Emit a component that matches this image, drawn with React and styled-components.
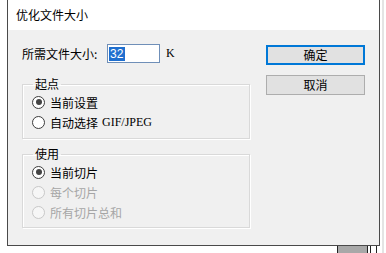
import React from "react";
import styled, { createGlobalStyle } from "styled-components";

const Global = createGlobalStyle`
  html, body { margin: 0; padding: 0; background: #fff; }
  body { font-family: "Noto Sans CJK SC", "Noto Sans", sans-serif; font-size: 12px; color: #000; }
`;

const Desktop = styled.div`
  position: relative;
  width: 386px;
  height: 253px;
  overflow: hidden;
  background: #fff;
`;

const Dialog = styled.div`
  margin-left: 7px;
  width: 373px;
  height: 246px;
  box-sizing: border-box;
  border: 1px solid #4a4a4a;
  border-top: none;
  background: #f0f0f0;
  display: flex;
  flex-direction: column;
`;

const TitleBar = styled.div`
  height: 30px;
  background: #fff;
  display: flex;
  align-items: center;
  padding-left: 8px;
  font-size: 12px;
  line-height: 16px;
`;

const Body = styled.div`
  flex: 1;
  display: grid;
  grid-template-columns: 1fr 99px;
  padding: 14px 14px 0 14px;
`;

const LeftCol = styled.div`
  display: flex;
  flex-direction: column;
  width: 228px;
`;

const SizeRow = styled.div`
  display: flex;
  align-items: center;
  height: 19px;
  margin-bottom: 13px;
`;

const Label = styled.span`
  width: 85px;
  line-height: 16px;
`;

const InputBox = styled.div`
  width: 53px;
  height: 19px;
  box-sizing: border-box;
  border: 1px solid #6f8fb8;
  background: #fff;
  display: flex;
  align-items: center;
  padding-left: 1px;
`;

const Selected = styled.span`
  background: #1f6fcf;
  color: #fff;
  font-family: "Liberation Sans", Arial, sans-serif;
  font-size: 12px;
  line-height: 14px;
  padding: 0 1px;
  width: 14px;
`;

const Unit = styled.span`
  margin-left: 6px;
  font-family: "Liberation Serif", serif;
  font-size: 12px;
`;

const Group = styled.fieldset`
  margin: 0 0 7px 0;
  padding: 0 0 ${(p) => p.$pb}px 9px;
  border: 1px solid #d9d9d9;
  box-shadow: 1px 1px 0 #fff, inset 1px 1px 0 #fff;
  min-width: 0;
`;

const Legend = styled.legend`
  margin-left: 1px;
  padding: 0 2px;
  line-height: 16px;
  font-size: 12px;
`;

const RadioRow = styled.div`
  display: flex;
  align-items: center;
  height: 20px;
  color: ${(p) => (p.$disabled ? "#a6a6a6" : "#000")};
`;

const RadioCircle = styled.span`
  width: 13px;
  height: 13px;
  box-sizing: border-box;
  border-radius: 50%;
  border: 1px solid ${(p) => (p.$disabled ? "#c8c8c8" : "#3c3c3c")};
  background: ${(p) => (p.$disabled ? "#f6f6f6" : "#fff")};
  display: flex;
  align-items: center;
  justify-content: center;
  margin-right: 5px;
  flex: none;
  &::after {
    content: "";
    display: ${(p) => (p.$checked ? "block" : "none")};
    width: 6px;
    height: 6px;
    border-radius: 50%;
    background: #444;
  }
`;

const Mono = styled.span`
  font-family: "Liberation Serif", serif;
  font-size: 12px;
  margin-left: 4px;
`;

const RightCol = styled.div`
  display: flex;
  flex-direction: column;
  gap: 10px;
  padding-top: 1px;
`;

const Button = styled.div`
  height: 20px;
  box-sizing: border-box;
  background: #e1e1e1;
  border: ${(p) => (p.$default ? "2px solid #0078d7" : "1px solid #adadad")};
  display: flex;
  align-items: center;
  justify-content: center;
  font-size: 12px;
  line-height: 16px;
`;

const Scrap = styled.div`
  position: absolute;
`;

function Radio({ checked, disabled, children }) {
  return (
    <RadioRow $disabled={disabled}>
      <RadioCircle $checked={checked} $disabled={disabled} />
      {children}
    </RadioRow>
  );
}

export default function App() {
  return (
    <>
      <Global />
      <Desktop>
        <Dialog>
          <TitleBar>优化文件大小</TitleBar>
          <Body>
            <LeftCol>
              <SizeRow>
                <Label>所需文件大小:</Label>
                <InputBox>
                  <Selected>32</Selected>
                </InputBox>
                <Unit>K</Unit>
              </SizeRow>
              <Group $pb={6}>
                <Legend>起点</Legend>
                <Radio checked>当前设置</Radio>
                <Radio>
                  自动选择<Mono>GIF/JPEG</Mono>
                </Radio>
              </Group>
              <Group $pb={5}>
                <Legend>使用</Legend>
                <Radio checked>当前切片</Radio>
                <Radio disabled>每个切片</Radio>
                <Radio disabled>所有切片总和</Radio>
              </Group>
            </LeftCol>
            <RightCol>
              <Button $default>确定</Button>
              <Button>取消</Button>
            </RightCol>
          </Body>
        </Dialog>
        <Scrap style={{ left: 337, top: 246, width: 29, height: 7, background: "#a8a8a8", borderLeft: "1px solid #222", borderRight: "1px solid #222" }} />
        <Scrap style={{ left: 370, top: 246, width: 1, height: 7, background: "#222" }} />
        <Scrap style={{ left: 376, top: 246, width: 1, height: 7, background: "#222" }} />
        <Scrap style={{ left: 382, top: 0, width: 2, height: 253, background: "#e4e4e4" }} />
      </Desktop>
    </>
  );
}
